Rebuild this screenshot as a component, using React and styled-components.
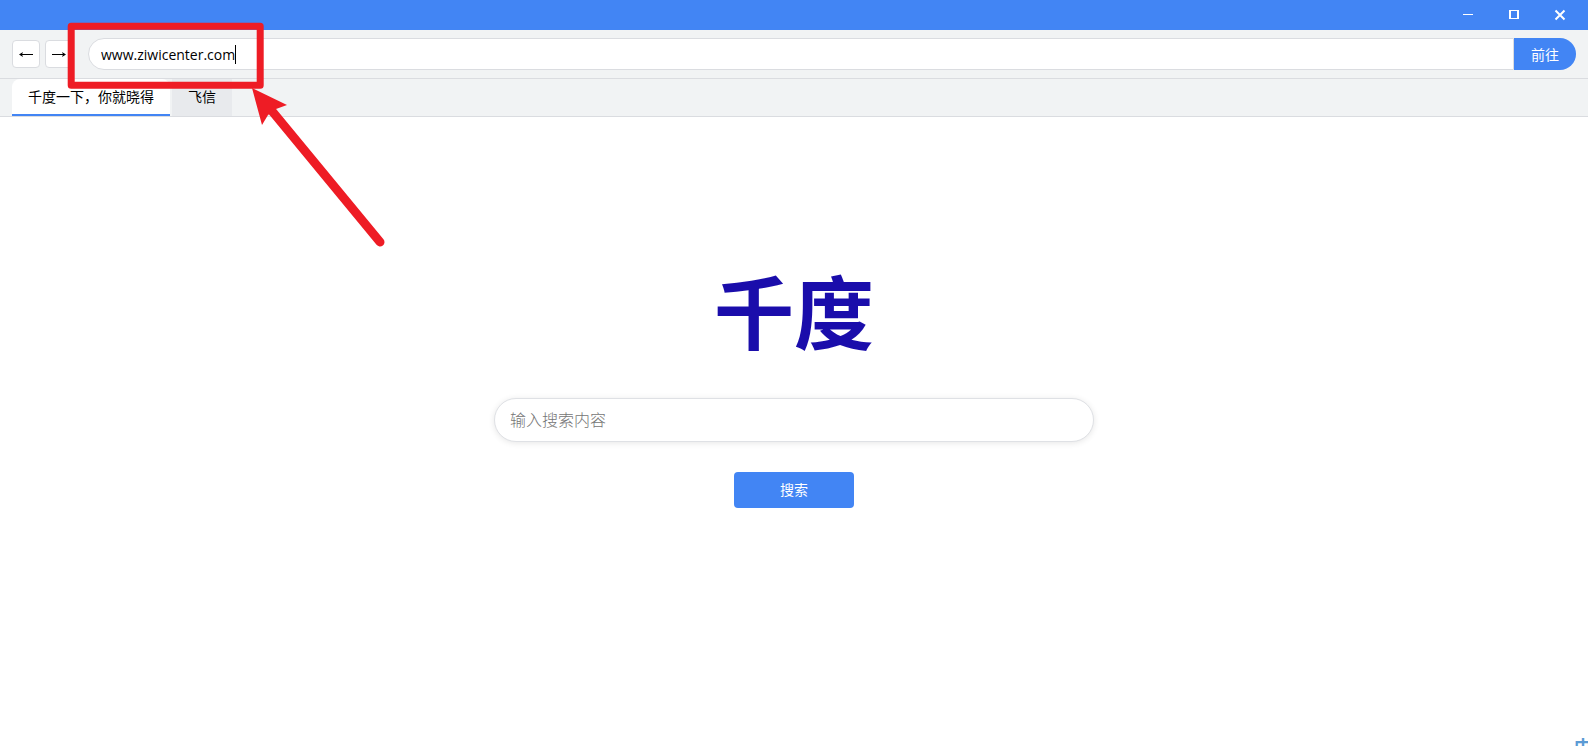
import React, { useState } from 'react';
import styled, { createGlobalStyle } from 'styled-components';

const GlobalStyle = createGlobalStyle`
  * {
    box-sizing: border-box;
  }

  body {
    margin: 0;
    background-color: #ffffff;
  }

  body, button, input {
    font-family: "Open Sans", "Noto Sans CJK SC", sans-serif;
  }
`;

const Window = styled.div`
  position: relative;
  display: flex;
  flex-direction: column;
  min-height: 100vh;
  overflow: hidden;
`;

const TitleBar = styled.header`
  display: flex;
  justify-content: flex-end;
  height: 30px;
  padding-right: 5px;
  background-color: #4285f4;
`;

const WindowButton = styled.button`
  display: flex;
  justify-content: center;
  align-items: center;
  width: 46px;
  height: 30px;
  padding: 0;
  border: none;
  background: none;
  color: #ffffff;
`;

const Toolbar = styled.form`
  display: flex;
  align-items: center;
  gap: 5px;
  padding: 8px 12px;
  border-bottom: 1px solid #dadce0;
  background-color: #f1f3f4;
`;

const NavButton = styled.button`
  display: flex;
  justify-content: center;
  align-items: center;
  width: 28px;
  height: 28px;
  padding: 0;
  border: 1px solid #dadce0;
  border-radius: 4px;
  background-color: #ffffff;
  color: #000000;
`;

const AddressGroup = styled.div`
  flex: 1;
  display: flex;
  margin-left: 10px;
`;

const AddressBox = styled.label`
  flex: 1;
  display: flex;
  align-items: center;
  height: 32px;
  padding: 0 12px;
  border: 1px solid #dadce0;
  border-radius: 16px 0 0 16px;
  background-color: #ffffff;
  cursor: text;
`;

const AddressInput = styled.input`
  field-sizing: content;
  padding: 0;
  border: none;
  outline: none;
  background: none;
  color: #000000;
  font-size: 14px;
`;

const Caret = styled.span`
  width: 1px;
  height: 19px;
  background-color: #000000;
`;

const GoButton = styled.button`
  width: 62px;
  height: 32px;
  padding: 0;
  border: none;
  border-radius: 0 16px 16px 0;
  background-color: #4285f4;
  color: #ffffff;
  font-size: 14px;
  cursor: pointer;
`;

const TabBar = styled.nav`
  display: flex;
  gap: 2px;
  height: 38px;
  padding: 0 12px;
  border-bottom: 1px solid #dadce0;
  background-color: #f1f3f4;
`;

const Tab = styled.button`
  padding: 0 16px 2px;
  border: none;
  border-bottom: 2px solid ${({ $active }) => ($active ? '#4285f4' : '#e8eaed')};
  border-radius: ${({ $active }) => ($active ? '8px 8px 0 0' : '0')};
  background-color: ${({ $active }) => ($active ? '#ffffff' : '#e8eaed')};
  color: #000000;
  font-size: 14px;
  cursor: pointer;
`;

const Page = styled.main`
  flex: 1;
  display: flex;
  flex-direction: column;
  align-items: center;
  padding-top: 137px;
`;

const Logo = styled.h1`
  margin: 0;
  color: #1a0dab;
  font-size: 80px;
  line-height: 115px;
`;

const SearchForm = styled.form`
  display: flex;
  flex-direction: column;
  align-items: center;
  gap: 30px;
  width: 100%;
  margin-top: 29px;
`;

const SearchInput = styled.input`
  width: 100%;
  max-width: 600px;
  height: 44px;
  padding: 0 15px;
  border: 1px solid #dfe1e5;
  border-radius: 22px;
  outline: none;
  box-shadow: 0 1px 6px rgba(0, 0, 0, 0.1);
  font-size: 16px;

  &::placeholder {
    color: #757575;
    font-weight: 300;
  }
`;

const SearchButton = styled.button`
  width: 120px;
  height: 36px;
  padding: 0 0 2px;
  border: none;
  border-radius: 4px;
  background-color: #4285f4;
  color: #ffffff;
  font-size: 14px;
  cursor: pointer;
`;

const Highlight = styled.svg`
  position: absolute;
  top: 0;
  left: 0;
  pointer-events: none;
`;

const InputMode = styled.span`
  position: absolute;
  right: -4px;
  bottom: -11px;
  color: #5b9bd5;
  font-size: 18px;
  font-weight: 700;
  line-height: 20px;
`;

const tabs = ['千度一下，你就晓得', '飞信'];

const App = () => {
  const [url, setUrl] = useState('www.ziwicenter.com');
  const [activeTab, setActiveTab] = useState(0);
  const [query, setQuery] = useState('');

  return (
    <Window>
      <GlobalStyle />
      <TitleBar>
        <WindowButton aria-label="最小化">
          <svg width="12" height="12" viewBox="0 0 12 12">
            <path d="M1 5.5h10" stroke="currentColor" />
          </svg>
        </WindowButton>
        <WindowButton aria-label="最大化">
          <svg width="12" height="12" viewBox="0 0 12 12">
            <path d="M1 1.5h10M1 9.5h10" stroke="currentColor" />
            <path d="M2 1v9M10 1v9" stroke="currentColor" strokeWidth="2" />
          </svg>
        </WindowButton>
        <WindowButton aria-label="关闭">
          <svg width="12" height="12" viewBox="0 0 12 12">
            <path d="M1.5 1.5l9 9M10.5 1.5l-9 9" stroke="currentColor" strokeWidth="2" />
          </svg>
        </WindowButton>
      </TitleBar>

      <Toolbar onSubmit={(e) => e.preventDefault()}>
        <NavButton type="button" aria-label="后退">
          <svg width="14" height="9" viewBox="0 0 14 9">
            <path d="M2 4h12v1H2z" fill="currentColor" />
            <path d="M0 4.5L4 2L3 4.5L4 7z" fill="currentColor" />
          </svg>
        </NavButton>
        <NavButton type="button" aria-label="前进">
          <svg width="14" height="9" viewBox="0 0 14 9">
            <path d="M0 4h12v1H0z" fill="currentColor" />
            <path d="M14 4.5L10 2L11 4.5L10 7z" fill="currentColor" />
          </svg>
        </NavButton>
        <AddressGroup>
          <AddressBox>
            <AddressInput
              type="text"
              aria-label="网址"
              value={url}
              onChange={(e) => setUrl(e.target.value)}
            />
            <Caret />
          </AddressBox>
          <GoButton type="submit">前往</GoButton>
        </AddressGroup>
      </Toolbar>

      <TabBar>
        {tabs.map((title, index) => (
          <Tab key={title} $active={index === activeTab} onClick={() => setActiveTab(index)}>
            {title}
          </Tab>
        ))}
      </TabBar>

      <Page>
        <Logo>千度</Logo>
        <SearchForm onSubmit={(e) => e.preventDefault()}>
          <SearchInput
            type="text"
            aria-label="搜索内容"
            placeholder="输入搜索内容"
            value={query}
            onChange={(e) => setQuery(e.target.value)}
          />
          <SearchButton type="submit">搜索</SearchButton>
        </SearchForm>
      </Page>

      {/* Red frame round the address and the arrow pointing at it */}
      <Highlight width="400" height="260" viewBox="0 0 400 260">
        <rect
          x="71.2"
          y="26.2"
          width="189"
          height="59"
          fill="none"
          stroke="#ee1c25"
          strokeWidth="7"
          strokeLinejoin="round"
        />
        <path d="M272 111L380 242" stroke="#ee1c25" strokeWidth="9" strokeLinecap="round" />
        <path d="M252 88L287 105L276 109L268 115L262 125Z" fill="#ee1c25" />
      </Highlight>
      <InputMode>中</InputMode>
    </Window>
  );
};

export default App;
